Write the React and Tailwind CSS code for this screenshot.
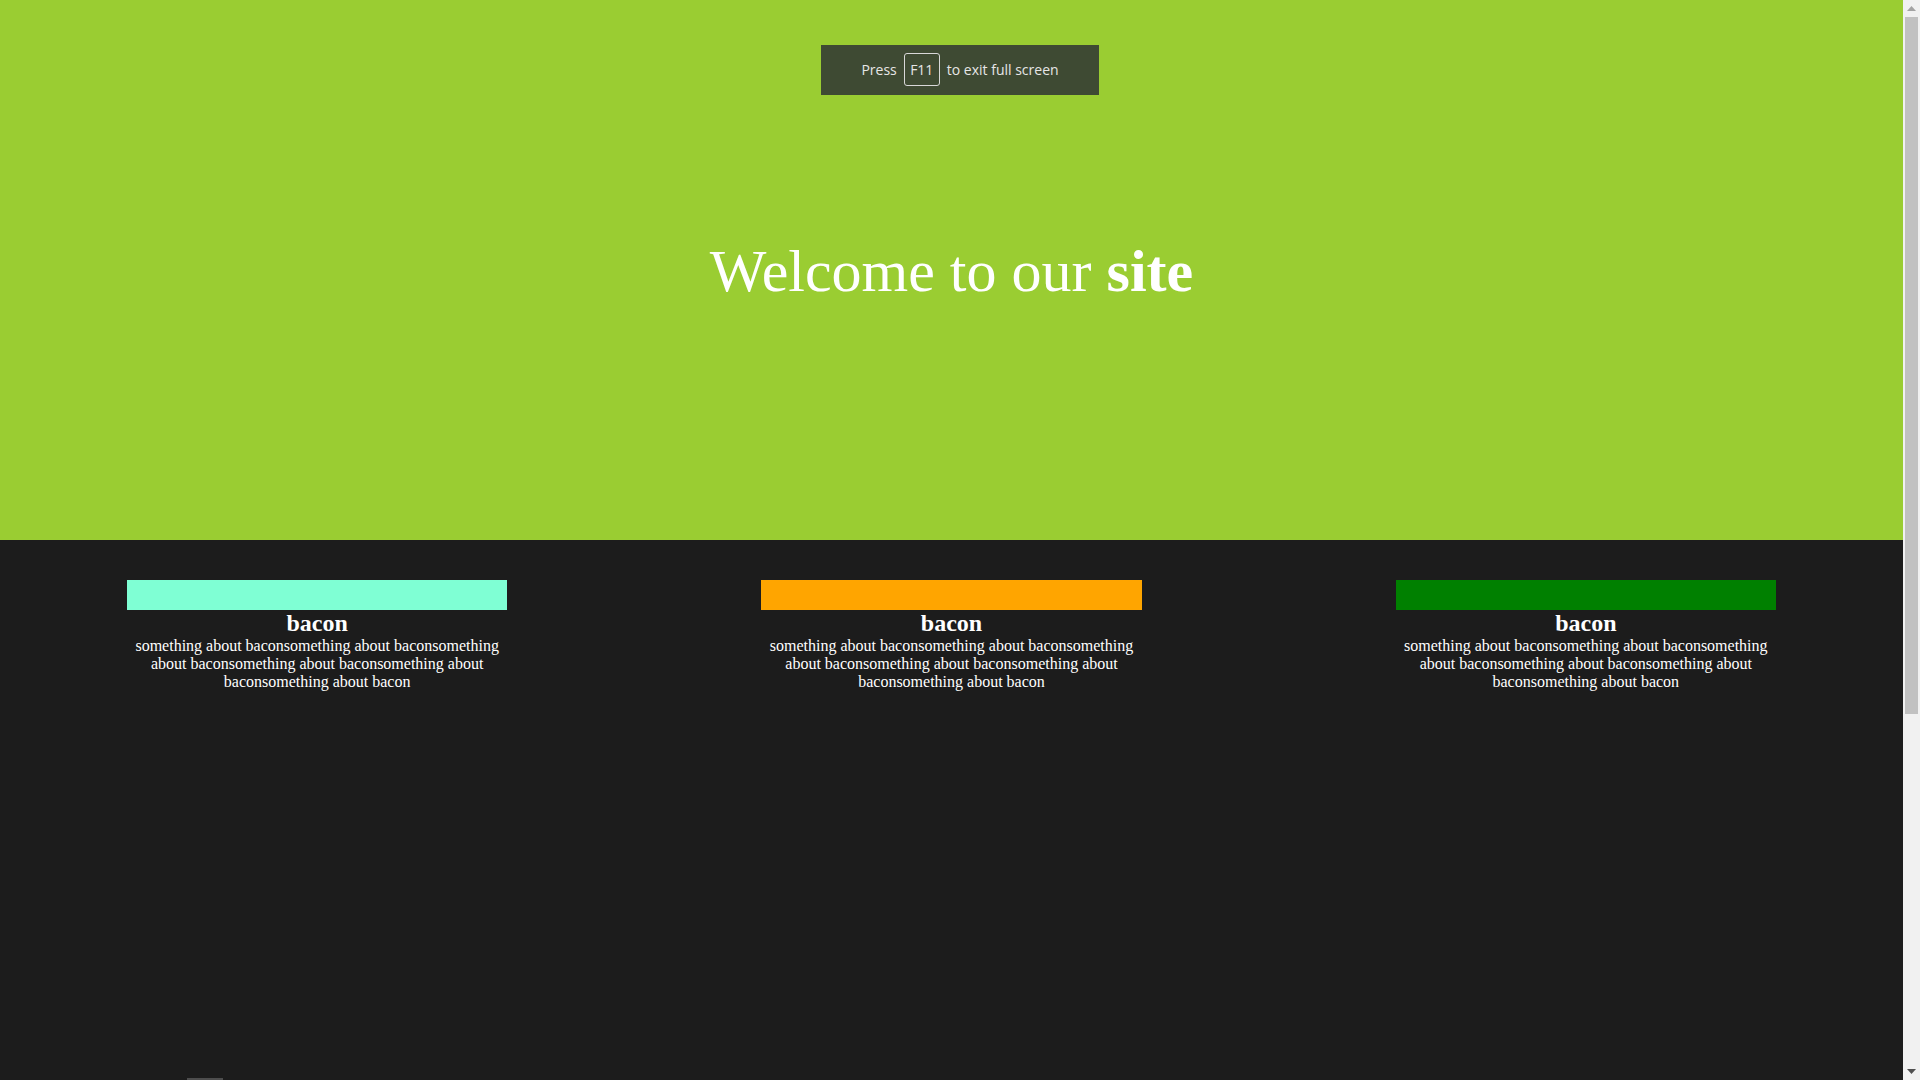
import React from 'react';

const cards = [
  { color: 'bg-[#7fffd4]' },
  { color: 'bg-[#ffa500]' },
  { color: 'bg-[#008000]' },
];

const blurb = 'something about baconsomething about baconsomething about baconsomething about baconsomething about baconsomething about bacon';

const Scrollbar = () => (
  <div className="w-[17px] h-full bg-[#f1f1f1] flex flex-col items-center shrink-0">
    <div className="h-[17px] w-full flex items-center justify-center">
      <svg width="9" height="5" viewBox="0 0 9 5"><path d="M4.5 0 L9 5 L0 5 Z" fill="#a3a3a3" /></svg>
    </div>
    <div className="w-[13px] h-[697px] bg-[#c1c1c1]" />
    <div className="flex-1" />
    <div className="h-[17px] w-full flex items-center justify-center">
      <svg width="9" height="5" viewBox="0 0 9 5"><path d="M0 0 L9 0 L4.5 5 Z" fill="#505050" /></svg>
    </div>
  </div>
);

const App = () => {
  return (
    <div className="h-screen w-full flex overflow-hidden bg-[#1c1c1c] font-['Liberation_Serif','Times_New_Roman',serif] text-white">
      <div className="flex-1 flex flex-col">
        {/* Hero */}
        <header className="h-[540px] bg-[#9acd32] flex justify-center pt-[239px]">
          <h1 className="text-[60px] leading-[64px] font-normal">
            Welcome to our <b className="font-bold">site</b>
          </h1>
        </header>

        {/* Cards */}
        <section className="flex-1 flex flex-col">
          <div className="grid grid-cols-3 pt-[40px]">
            {cards.map((card, i) => (
              <div key={i} className="flex flex-col items-center">
                <div className="w-[60%] text-center">
                  <div className={`h-[30px] w-full ${card.color}`} />
                  <h2 className="text-[24px] font-bold leading-[27px]">bacon</h2>
                  <p className="text-[16px] leading-[18px]">{blurb}</p>
                </div>
              </div>
            ))}
          </div>
          <div className="mt-auto pl-[187px]">
            <div className="w-[36px] h-[2px] bg-[#4d4d4d]" />
          </div>
        </section>
      </div>

      <Scrollbar />

      {/* full screen notice */}
      <div className="fixed top-[45px] left-1/2 -translate-x-1/2 w-[278px] h-[50px] bg-[#3e4a33] flex items-center justify-center gap-[7px] pb-[1px] font-['Open_Sans','Noto_Sans',sans-serif] text-[14px] text-[#e6e6e6]">
        <span>Press</span>
        <span className="w-[36px] h-[33px] border border-[#d8d8d8] rounded-[3px] flex items-center justify-center">F11</span>
        <span>to exit full screen</span>
      </div>
    </div>
  );
};

export default App;
